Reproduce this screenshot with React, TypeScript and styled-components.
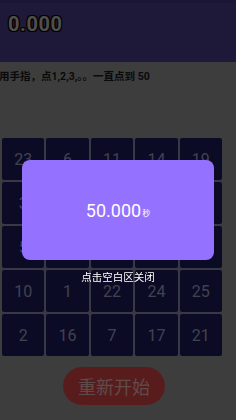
import React from 'react';
import styled, { createGlobalStyle } from 'styled-components';

const GlobalStyle = createGlobalStyle`
  html, body {
    margin: 0;
    padding: 0;
    background: #989898;
    font-family: Roboto, "Noto Sans CJK SC", sans-serif;
  }
`;

const Page = styled.div`
  width: 236px;
  height: 420px;
  overflow: hidden;
  display: flex;
  flex-direction: column;
`;

const Header = styled.div`
  height: 62px;
  background: #4b3e8e;
  border-top: 3px solid #44397f;
  box-sizing: border-box;
  display: flex;
  align-items: center;
  padding: 0 0 18px 8px;
`;

const Timer = styled.span`
  font-size: 20px;
  font-weight: bold;
  color: #c4c4c4;
  letter-spacing: 0.6px;
  text-shadow: -1px -1px 0 #000, 1px -1px 0 #000, -1px 1px 0 #000, 1px 1px 0 #000;
`;

const Hint = styled.div`
  margin-top: 6px;
  font-size: 10.5px;
  font-weight: bold;
  color: #1a1a1a;
  white-space: nowrap;
  margin-left: -1px;
`;

const Grid = styled.div`
  margin: 55px 0 0 2px;
  width: 220px;
  display: grid;
  grid-template-columns: repeat(5, 1fr);
  gap: 2px;
  background: #8e8eb0;
  border-radius: 3px;
  padding: 0;
`;

const Cell = styled.div`
  height: 42px;
  background: #1c1c5e;
  border-radius: 2px;
  display: flex;
  align-items: center;
  justify-content: center;
  color: #a4a4c6;
  font-size: 16px;
`;

const Restart = styled.button`
  margin: 11px 0 0 63px;
  width: 102px;
  height: 38px;
  border: none;
  border-radius: 19px;
  background: #dc4848;
  color: #f2b8b8;
  font-size: 18px;
  font-family: Roboto, "Noto Sans CJK SC", sans-serif;
`;

const Overlay = styled.div`
  position: fixed;
  inset: 0;
  background: rgba(0, 0, 0, 0.6);
  display: flex;
  align-items: center;
  justify-content: center;
`;

const DialogWrap = styled.div`
  position: relative;
`;

const Dialog = styled.div`
  width: 192px;
  height: 100px;
  background: #9471ff;
  border-radius: 8px;
  display: flex;
  align-items: center;
  justify-content: center;
  color: #ffffff;
`;

const Score = styled.span`
  font-size: 18px;
`;

const Unit = styled.span`
  font-size: 8px;
  margin-left: 1px;
  position: relative;
  top: 2px;
`;

const CloseHint = styled.div`
  position: absolute;
  top: 109px;
  left: 0;
  right: 0;
  text-align: center;
  color: #ffffff;
  font-size: 10.5px;
`;

const numbers = [
  23, 6, 11, 14, 19,
  3, 8, 12, 4, 18,
  5, 13, 9, 20, 15,
  10, 1, 22, 24, 25,
  2, 16, 7, 17, 21,
];

export default function App() {
  return (
    <>
      <GlobalStyle />
      <Page>
        <Header>
          <Timer>0.000</Timer>
        </Header>
        <Hint>用手指，点1,2,3,。。一直点到 50</Hint>
        <Grid>
          {numbers.map((n, i) => (
            <Cell key={i}>{n}</Cell>
          ))}
        </Grid>
        <Restart>重新开始</Restart>
      </Page>
      <Overlay>
        <DialogWrap>
          <Dialog>
            <Score>50.000</Score>
            <Unit>秒</Unit>
          </Dialog>
          <CloseHint>点击空白区关闭</CloseHint>
        </DialogWrap>
      </Overlay>
    </>
  );
}
